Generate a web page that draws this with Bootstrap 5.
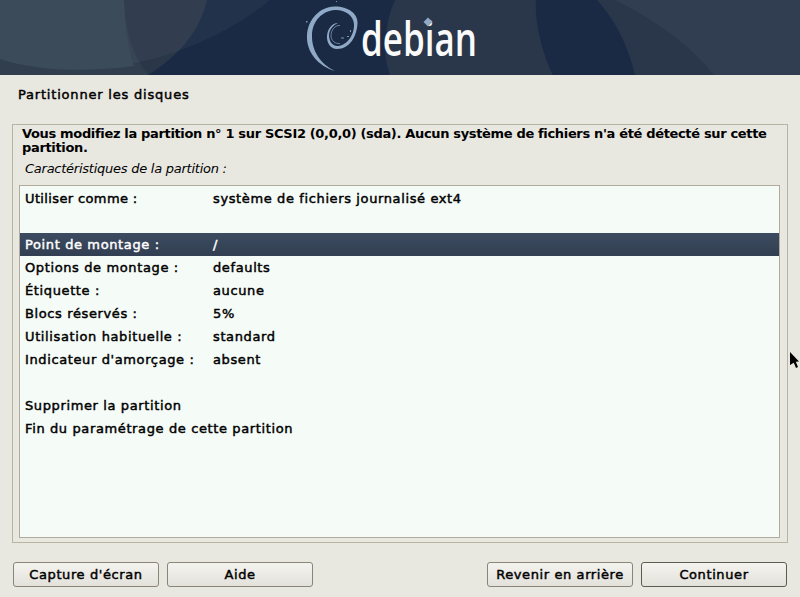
<!DOCTYPE html>
<html lang="fr">
<head>
<meta charset="utf-8">
<title>Partitionner les disques</title>
<link href="https://cdn.jsdelivr.net/npm/bootstrap@5.3.0/dist/css/bootstrap.min.css" rel="stylesheet">
<style>
html,body{height:100%;overflow:hidden}
body{background:#e8e7e0;color:#000;font-family:"DejaVu Sans",sans-serif;font-size:13px;line-height:15px;font-weight:400}
.shell{height:597px}
.brand{height:75px;flex:none}
.brand svg{display:block}
.logo-word{font-family:"Open Sans",sans-serif;font-weight:600;fill:#fafafa}
.page-title{height:49px;padding:12px 18px 0;flex:none;letter-spacing:.8px;-webkit-text-stroke:.45px #000}
.frame{margin:0 12px;border:1px solid #b9b3a4;padding:2px 7px 4px 6px;height:419px;flex:none}
.intro{padding:0 3px;margin:0;font-weight:700;height:30px;line-height:14px;letter-spacing:-.34px}
.caption{font-style:italic;padding:4px 0 0 6px;height:28px;margin:0;letter-spacing:-.25px}
.choices{border:1px solid #b1ab9c;background:#f5fbf7;flex:1 1 auto;padding:1px 0}
.choice{height:23px;line-height:23px;padding-left:5px;letter-spacing:.62px;-webkit-text-stroke:.45px #000}
.choice.picked{background:linear-gradient(#3c4b60,#323f52);color:#fff;-webkit-text-stroke:.45px #fff}
.key{width:188px;flex:none}
.key-short{letter-spacing:.37px}
.foot{height:79px;padding:19px 13px 0}
.gbtn{width:146px;height:25px;padding:0;font:inherit;line-height:23px;letter-spacing:.6px;color:#000;background:linear-gradient(#f4f3ef,#e2e1da);border:1px solid #8c8577;border-radius:3px;-webkit-text-stroke:.45px #000}
.gbtn.go{border-color:#5f5a50}
.pointer{position:absolute;left:790px;top:352px}
</style>
</head>
<body>
<div class="shell d-flex flex-column">
  <div class="brand">
    <svg width="800" height="75" viewBox="0 0 800 75" role="img" aria-label="debian">
      <rect width="800" height="75" fill="#1a2a44"/>
      <path d="M0 0H207C200 30 180 55 148 75H0Z" fill="#2a3749"/>
      <path d="M0 0H124C125 30 132 55 148 75H0Z" fill="#303e4e"/>
      <path d="M0 0H270C240 25 205 42 175 52C130 68 60 78 0 59Z" fill="#fff" opacity=".04"/>
      <path d="M0 0H124C125 22 127 45 134 66C90 72 40 72 0 59Z" fill="#3b4b5a"/>
      <path d="M395 0H536C534 25 545 60 553 75H390C382 55 384 25 395 0Z" fill="#2a3649"/>
      <path d="M597 0H800V75H635C628 45 615 20 597 0Z" fill="#2a3649"/>
      <path d="M615 0H800V75H714C690 45 655 20 615 0Z" fill="#313d50"/>
      <path d="M335 71C318 66 306 52 307 35C308 19 320 7 334 6.500C347 6 358 13 357.500 23C357 36 350 49 337 49C330 49 326.500 42 327 36C327.500 29 332 23 338 23C333 25 329 30 329 36C329.500 42 333 46.500 338 46C348 45 354.500 34 354 24C353.500 15 344 9.500 335 10C322 11 312.500 21 312 35C311.500 50 320 64 335 71Z" fill="#8fa9c6"/>
      <path d="M340 25.500C335 25 331 30 331 36C331.500 41 335 44 340 43.500" fill="none" stroke="#7d97b5" stroke-width=".8"/>
      <path d="M306 21h1.500v1.500h-1.500zM347 36h2v1h-2zM341 37.500h3v1h-3zM350 30h1v2h-1zM336 1h1v1h-1z" fill="#7d97b5"/>
      <text class="logo-word" x="361" y="55.500" font-size="47" textLength="116" lengthAdjust="spacingAndGlyphs">debian</text>
      <path d="M428 17.500L432.500 22L428 26.500L423.500 22Z" fill="#8fa9c6"/>
    </svg>
  </div>
  <div class="page-title">Partitionner les disques</div>
  <div class="frame d-flex flex-column">
    <p class="intro">Vous modifiez la partition n° 1 sur SCSI2 (0,0,0) (sda). Aucun système de fichiers n'a été détecté sur cette partition.</p>
    <p class="caption">Caractéristiques de la partition :</p>
    <div class="choices">
      <div class="choice d-flex"><span class="key key-short">Utiliser comme :</span><span>système de fichiers journalisé ext4</span></div>
      <div class="choice"></div>
      <div class="choice picked d-flex"><span class="key">Point de montage :</span><span>/</span></div>
      <div class="choice d-flex"><span class="key">Options de montage :</span><span>defaults</span></div>
      <div class="choice d-flex"><span class="key">Étiquette :</span><span>aucune</span></div>
      <div class="choice d-flex"><span class="key">Blocs réservés :</span><span>5%</span></div>
      <div class="choice d-flex"><span class="key">Utilisation habituelle :</span><span>standard</span></div>
      <div class="choice d-flex"><span class="key">Indicateur d'amorçage :</span><span>absent</span></div>
      <div class="choice"></div>
      <div class="choice">Supprimer la partition</div>
      <div class="choice">Fin du paramétrage de cette partition</div>
    </div>
  </div>
  <div class="foot d-flex gap-2">
    <button type="button" class="btn gbtn">Capture d'écran</button>
    <button type="button" class="btn gbtn">Aide</button>
    <button type="button" class="btn gbtn ms-auto">Revenir en arrière</button>
    <button type="button" class="btn gbtn go">Continuer</button>
  </div>
</div>
<svg class="pointer" width="10" height="17" viewBox="0 0 10 17" aria-hidden="true"><path d="M0 0L9 9.500L5.800 9.800L8 15L6 16L3.800 10.800L0 13Z" fill="#000"/></svg>
<script src="https://cdn.jsdelivr.net/npm/bootstrap@5.3.0/dist/js/bootstrap.bundle.min.js"></script>
</body>
</html>
